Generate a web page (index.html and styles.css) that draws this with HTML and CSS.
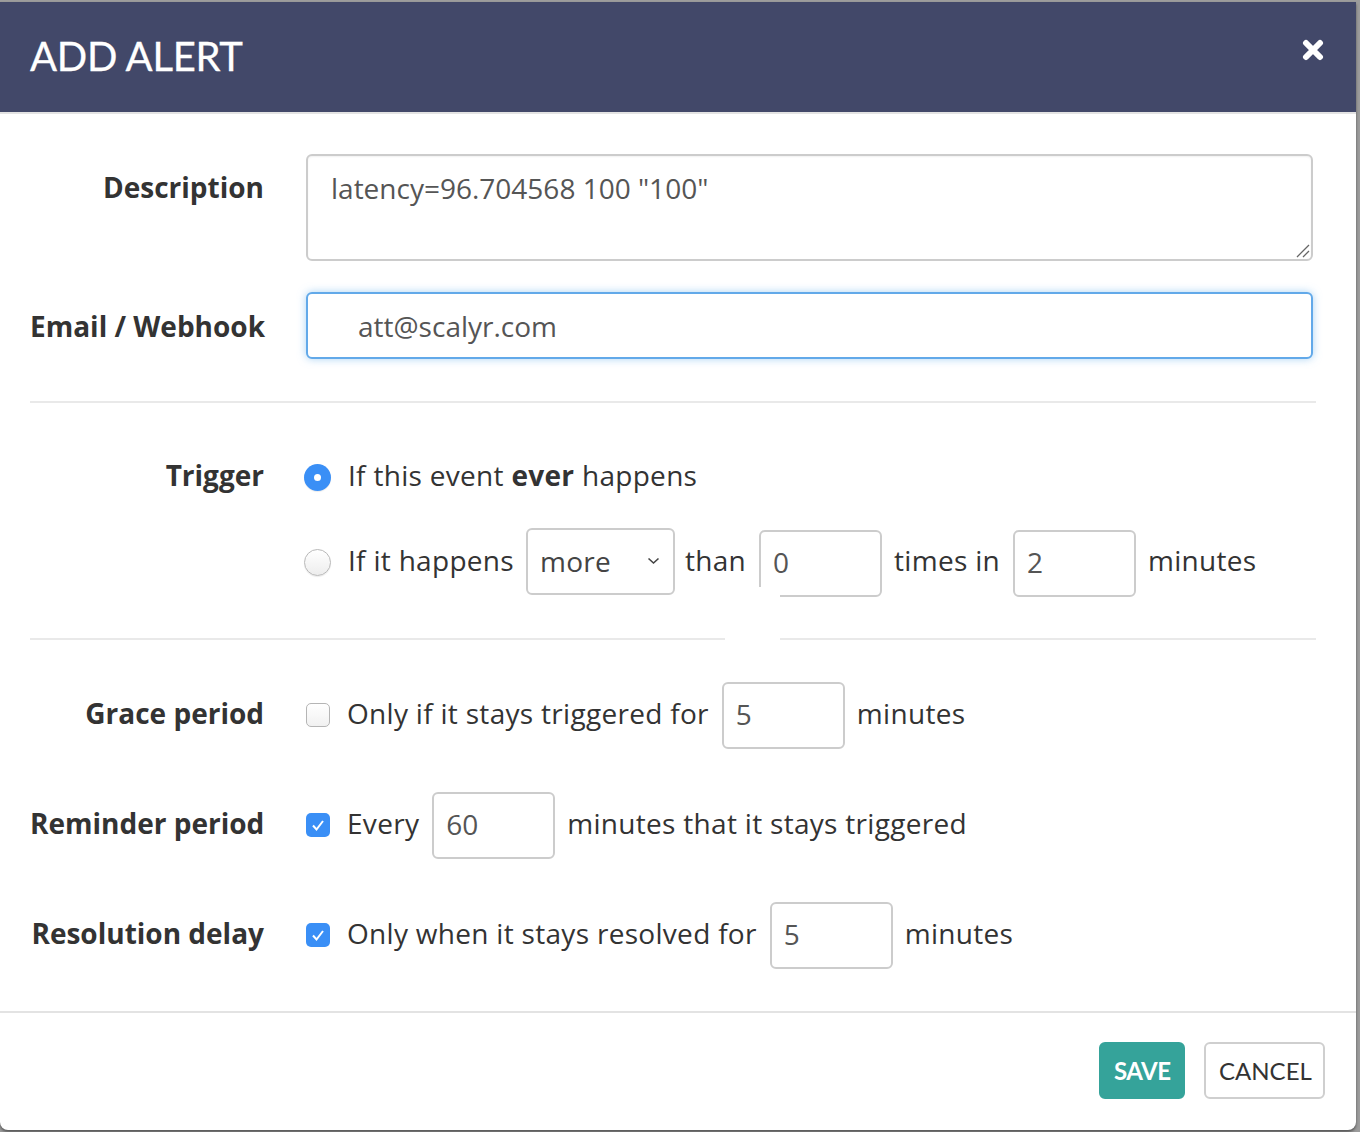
FILE: index.html
```html
<!DOCTYPE html>
<html lang="en">
<head>
<meta charset="utf-8">
<title>Add Alert</title>
<link rel="stylesheet" href="styles.css">
</head>
<body>
<div class="modal">
  <div class="modal-header">
    <h1 class="modal-title">ADD ALERT</h1>
    <button class="close" type="button" aria-label="Close">
      <svg width="22" height="22" viewBox="0 0 22 22"><path d="M4 4 L18 18 M18 4 L4 18" stroke="#fff" stroke-width="6" stroke-linecap="round"/></svg>
    </button>
  </div>

  <div class="modal-body">
    <div class="row row-top">
      <label class="lbl">Description</label>
      <div class="ctl">
        <div class="textarea">latency=96.704568 100 "100"
          <svg class="grip" width="14" height="14" viewBox="0 0 14 14"><path d="M1 13 L13 1 M7 13 L13 7" stroke="#666" stroke-width="1.3"/></svg>
        </div>
      </div>
    </div>

    <div class="row row-email">
      <label class="lbl">Email / Webhook</label>
      <div class="ctl">
        <div class="input input-focus">att@scalyr.com</div>
      </div>
    </div>

    <hr class="sep sep-1">

    <div class="row row-trigger">
      <label class="lbl lbl-trigger">Trigger</label>
      <div class="ctl">
        <div class="line line-ever">
          <span class="radio radio-on"></span>
          <span class="txt">If this event <b>ever</b> happens</span>
        </div>
        <div class="line line-count">
          <span class="radio"></span>
          <span class="txt">If it happens</span>
          <div class="select">more
            <svg class="chev" width="13" height="8" viewBox="0 0 13 8"><path d="M1.5 1.5 L6.5 6 L11.5 1.5" fill="none" stroke="#444" stroke-width="1.6"/></svg>
          </div>
          <span class="txt">than</span>
          <div class="input small low">0</div>
          <span class="txt">times in</span>
          <div class="input small low">2</div>
          <span class="txt">minutes</span>
        </div>
      </div>
    </div>

    <hr class="sep sep-2">

    <div class="row row-opt row-grace">
      <label class="lbl">Grace period</label>
      <div class="ctl line">
        <span class="check"></span>
        <span class="txt">Only if it stays triggered for</span>
        <div class="input small">5</div>
        <span class="txt">minutes</span>
      </div>
    </div>

    <div class="row row-opt">
      <label class="lbl">Reminder period</label>
      <div class="ctl line">
        <span class="check check-on"><svg width="24" height="24" viewBox="0 0 24 24"><path d="M7 12.5 L10.5 16.5 L17 8" fill="none" stroke="#fff" stroke-width="2"/></svg></span>
        <span class="txt">Every</span>
        <div class="input small">60</div>
        <span class="txt">minutes that it stays triggered</span>
      </div>
    </div>

    <div class="row row-opt">
      <label class="lbl">Resolution delay</label>
      <div class="ctl line">
        <span class="check check-on"><svg width="24" height="24" viewBox="0 0 24 24"><path d="M7 12.5 L10.5 16.5 L17 8" fill="none" stroke="#fff" stroke-width="2"/></svg></span>
        <span class="txt">Only when it stays resolved for</span>
        <div class="input small">5</div>
        <span class="txt">minutes</span>
      </div>
    </div>
  </div>

  <div class="modal-footer">
    <button class="btn btn-save" type="button">SAVE</button>
    <button class="btn btn-cancel" type="button">CANCEL</button>
  </div>

  <div class="blank-patch"></div>
</div>
</body>
</html>
```

FILE: styles.css
```css
html, body {
  margin: 0;
  padding: 0;
  background: #9c9c9c;
}

body {
  width: 1360px;
  height: 1132px;
  overflow: hidden;
  font-family: "Open Sans", "DejaVu Sans", sans-serif;
  color: #333;
}

.modal {
  position: relative;
  width: 1356px;
  margin-top: 2px;
  background: #fff;
  border-radius: 0 0 8px 8px;
  box-shadow: 0 2px 3px rgba(0, 0, 0, 0.45);
}

.modal-header {
  height: 110px;
  background: #424869;
  border-bottom: 2px solid #e3e3e3;
  display: flex;
  align-items: center;
  justify-content: space-between;
  padding: 0 32px 0 30px;
}

.modal-title {
  margin: 0;
  font-family: Lato, "Liberation Sans", sans-serif;
  font-weight: 400;
  font-size: 40px;
  line-height: 1;
  color: #fff;
  letter-spacing: -0.3px;
  padding-bottom: 2px;
  -webkit-text-stroke: 0.3px #fff;
}

.close {
  background: none;
  border: 0;
  padding: 0;
  width: 22px;
  height: 22px;
  margin-top: -14px;
  display: block;
}

.close svg { display: block; }

.modal-body {
  padding: 40px 40px 42px 30px;
}

.row {
  display: grid;
  grid-template-columns: 234px 1fr;
  column-gap: 42px;
  align-items: center;
}

.row-top { align-items: start; }

.lbl {
  text-align: right;
  font-weight: 700;
  font-size: 28px;
  line-height: 40px;
  color: #333;
  white-space: nowrap;
}

.row-top .lbl { padding-top: 13px; }

.row-opt .lbl { padding-bottom: 6px; }

.ctl {
  padding-right: 3px;
  min-width: 0;
}

.textarea {
  position: relative;
  box-sizing: border-box;
  height: 107px;
  border: 2px solid #cccccc;
  border-radius: 6px;
  padding: 12px 23px;
  font-size: 28px;
  line-height: 40px;
  color: #555;
  box-shadow: inset 0 1px 2px rgba(0, 0, 0, 0.06);
}

.grip {
  position: absolute;
  right: 1px;
  bottom: 1px;
}

.row-email { margin-top: 31px; }

.input {
  box-sizing: border-box;
  height: 67px;
  border: 2px solid #cccccc;
  border-radius: 6px;
  font-size: 28px;
  line-height: 40px;
  color: #555;
  display: flex;
  align-items: center;
  padding: 0 12px;
  background: #fff;
}

.input-focus {
  border-color: #62a9e9;
  box-shadow: 0 0 8px rgba(102, 175, 233, 0.55);
  padding-left: 50px;
  color: #555;
}

.sep {
  border: 0;
  height: 2px;
  background: #e9e9e9;
  margin: 0;
}

.sep-1 { margin-top: 42px; }
.sep-2 { margin-top: 41px; }

.row-trigger {
  margin-top: 56px;
  align-items: start;
}

.lbl-trigger {
  line-height: 36px;
  margin-top: -2px;
}

.line {
  display: flex;
  align-items: center;
  font-size: 28px;
  color: #333;
  white-space: nowrap;
}

.line-ever {
  height: 36px;
  line-height: 36px;
}

.line-count {
  margin-top: 33px;
  height: 69px;
}

.txt {
  line-height: 40px;
  letter-spacing: 0.3px;
  padding-bottom: 6px;
}

.line-ever .txt { padding-bottom: 4px; }

.radio {
  box-sizing: border-box;
  width: 27px;
  height: 27px;
  border-radius: 50%;
  margin-left: -2px;
  margin-right: 17px;
  flex: none;
  border: 1.5px solid #b8b8b8;
  background: linear-gradient(#ffffff, #ededed);
  box-shadow: 0 1px 1px rgba(0, 0, 0, 0.08);
}

.radio-on {
  border: 0;
  background: #3a8ff6;
  position: relative;
}

.radio-on::after {
  content: "";
  position: absolute;
  left: 10px;
  top: 10px;
  width: 7px;
  height: 7px;
  border-radius: 50%;
  background: #fff;
}

.select {
  position: relative;
  box-sizing: border-box;
  width: 149px;
  height: 67px;
  align-self: flex-start;
  border: 2px solid #cccccc;
  border-radius: 6px;
  padding: 0 12px 2px;
  margin: 0 10px 0 12px;
  display: flex;
  align-items: center;
  font-size: 28px;
  color: #444;
  letter-spacing: 0.3px;
}

.chev {
  position: absolute;
  right: 13px;
  top: 27px;
}

.small {
  width: 123px;
  flex: none;
  margin: 0 12px 0 13px;
  padding-bottom: 4px;
}

.low { align-self: flex-end; }

.row-opt {
  height: 67px;
}

.row-grace { margin-top: 42px; }
.row-opt + .row-opt { margin-top: 43px; }

.check {
  box-sizing: border-box;
  width: 24px;
  height: 24px;
  border-radius: 5px;
  margin-right: 17px;
  flex: none;
  border: 1.5px solid #b5b5b5;
  background: linear-gradient(#ffffff, #f1f1f1);
  margin-bottom: 2px;
}

.check-on {
  border: 0;
  background: #3a8ff6;
}

.check svg { display: block; }

.modal-footer {
  border-top: 2px solid #e3e3e3;
  padding: 29px 31px 31px 0;
  display: flex;
  justify-content: flex-end;
  gap: 19px;
}

.btn {
  box-sizing: border-box;
  height: 57px;
  border-radius: 6px;
  font-family: Lato, "Liberation Sans", sans-serif;
  font-size: 24px;
  padding: 0 13px;
  line-height: 1;
}

.btn-save {
  width: 86px;
  background: #35a39a;
  border: 2px solid #35a39a;
  color: #fff;
  font-weight: 700;
  letter-spacing: -0.5px;
}

.btn-cancel {
  width: 121px;
  background: #fff;
  border: 2px solid #cfcfcf;
  color: #333;
}

.blank-patch {
  position: absolute;
  left: 725px;
  top: 585px;
  width: 55px;
  height: 58px;
  background: #fff;
}
```
